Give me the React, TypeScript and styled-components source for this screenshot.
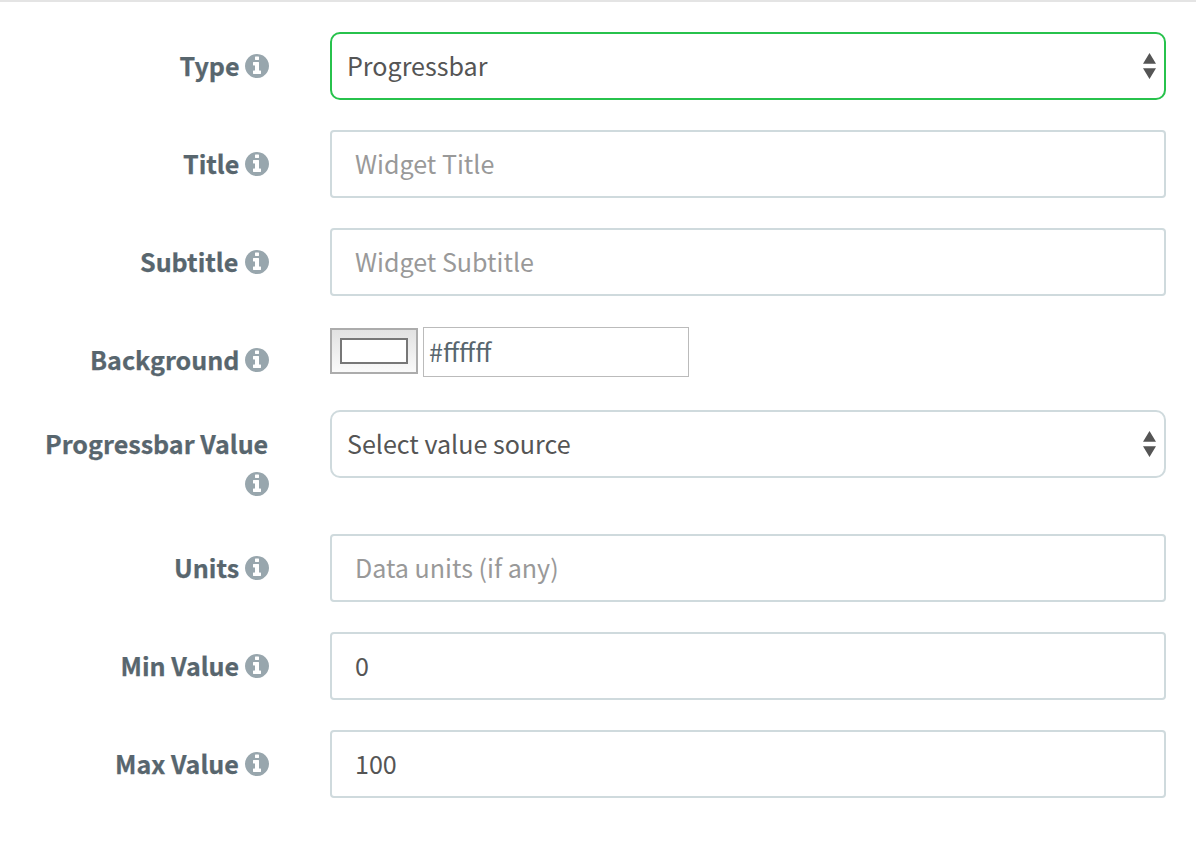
import React from "react";
import styled, { createGlobalStyle } from "styled-components";

const GlobalStyle = createGlobalStyle`
  * { box-sizing: border-box; }
  body {
    margin: 0;
    background: #fff;
    font-family: "Source Sans Pro", "Noto Sans CJK SC", sans-serif;
    font-size: 25.09px;
    color: #58666e;
  }
`;

const Form = styled.form`
  display: flex;
  flex-direction: column;
  gap: 30px;
  height: 858px;
  padding: 30px 30px 0;
  border-top: 2px solid #e4e4e4;
`;

const Row = styled.div`
  display: grid;
  grid-template-columns: 239px 836px;
  justify-content: space-between;
  align-items: start;
`;

const Label = styled.label`
  padding-top: 14px;
  line-height: 40px;
  font-weight: 700;
  text-align: right;
`;

const LabelText = styled.span<{ $width: number }>`
  display: inline-block;
  width: ${(p) => p.$width}px;
  height: 40px;
  line-height: 38px;
  -webkit-text-stroke: 0.25px currentColor;
  vertical-align: top;
  white-space: nowrap;
  text-align: left;
`;

const Icon = styled.svg`
  display: inline-block;
  width: 24px;
  height: 24px;
  margin: 8px 0 8px 6px;
  vertical-align: top;
  fill: #98a6ad;
`;

const TextInput = styled.input`
  width: 100%;
  height: 68px;
  padding: 0 23px 2px;
  border: 2px solid #cfdadd;
  border-radius: 4px;
  background: #fff;
  color: #555;
  font: inherit;
  outline: 0;
  &::placeholder { color: #999; opacity: 1; }
`;

const SelectBox = styled.div<{ $active?: boolean }>`
  display: flex;
  align-items: center;
  justify-content: space-between;
  height: 68px;
  padding: 0 8px 0 15px;
  border: 2px solid ${(p) => (p.$active ? "#27c24c" : "#cfdadd")};
  border-radius: 10px;
  color: #555;
`;

const SelectText = styled.span`
  padding-bottom: 2px;
  line-height: 40px;
`;

const Arrows = styled.svg`
  width: 13px;
  height: 26px;
  fill: #555;
`;

const ColorField = styled.div`
  display: flex;
  gap: 5px;
  height: 54px;
  padding-top: 1px;
`;

const Swatch = styled.div`
  width: 88px;
  height: 46px;
  margin-top: 1px;
  padding: 8px;
  border: 2px solid #acacac;
  background: linear-gradient(#e2e2e2, #fafafa);
`;

const SwatchColor = styled.div`
  width: 68px;
  height: 26px;
  border: 2px solid #777;
  background: #fff;
`;

const HexInput = styled.input`
  width: 266px;
  height: 50px;
  padding: 0 5px 3px;
  border: 1px solid #bbb;
  background: #fff;
  color: #58666e;
  font: inherit;
  outline: 0;
`;

const InfoIcon = () => (
  <Icon viewBox="128 128 1536 1536" aria-hidden="true">
    <path d="M1152 1376v-160q0-14-9-23t-23-9h-96v-512q0-14-9-23t-23-9h-320q-14 0-23 9t-9 23v160q0 14 9 23t23 9h96v320h-96q-14 0-23 9t-9 23v160q0 14 9 23t23 9h448q14 0 23-9t9-23zm-128-896v-160q0-14-9-23t-23-9h-192q-14 0-23 9t-9 23v160q0 14 9 23t23 9h192q14 0 23-9t9-23zm640 416q0 209-103 385.5t-279.5 279.5-385.5 103-385.5-103-279.5-279.5-103-385.5 103-385.5 279.5-279.5 385.5-103 385.5 103 279.5 279.5 103 385.5z" />
  </Icon>
);

function Field({ label, width, children }: { label: string; width: number; children: React.ReactNode }) {
  return (
    <Row>
      <Label>
        <LabelText $width={width}>{label}</LabelText>
        <wbr />
        <InfoIcon />
      </Label>
      {children}
    </Row>
  );
}

function Select({ value, active }: { value: string; active?: boolean }) {
  return (
    <SelectBox $active={active} role="combobox">
      <SelectText>{value}</SelectText>
      <Arrows viewBox="0 0 13 26" aria-hidden="true">
        <path d="M6.5 0 13 10.7H0zM0 15.3h13L6.5 26z" />
      </Arrows>
    </SelectBox>
  );
}

export default function App() {
  return (
    <>
      <GlobalStyle />
      <Form>
        <Field label="Type" width={59.5}>
          <Select value="Progressbar" active />
        </Field>
        <Field label="Title" width={56}>
          <TextInput placeholder="Widget Title" />
        </Field>
        <Field label="Subtitle" width={99}>
          <TextInput placeholder="Widget Subtitle" />
        </Field>
        <Field label="Background" width={149}>
          <ColorField>
            <Swatch>
              <SwatchColor />
            </Swatch>
            <HexInput defaultValue="#ffffff" />
          </ColorField>
        </Field>
        <Field label="Progressbar Value" width={224}>
          <Select value="Select value source" />
        </Field>
        <Field label="Units" width={65}>
          <TextInput placeholder="Data units (if any)" />
        </Field>
        <Field label="Min Value" width={118.5}>
          <TextInput defaultValue="0" />
        </Field>
        <Field label="Max Value" width={124}>
          <TextInput defaultValue="100" />
        </Field>
      </Form>
    </>
  );
}
